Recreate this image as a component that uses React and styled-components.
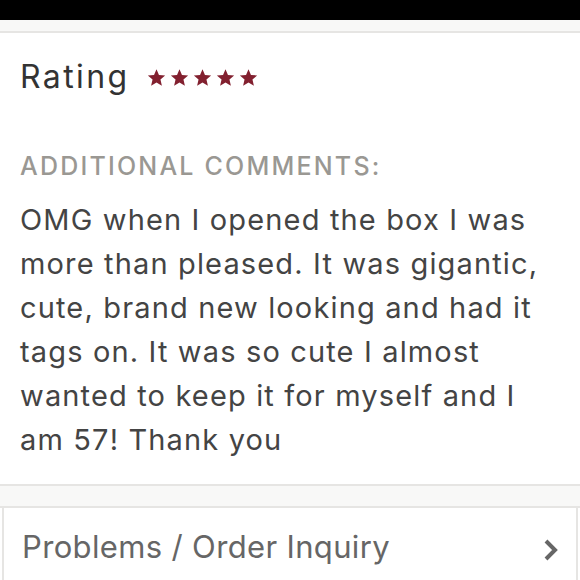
import React from "react";
import styled, { createGlobalStyle } from "styled-components";

const Global = createGlobalStyle`
  html, body { margin: 0; padding: 0; background: #fff; }
  body { font-family: Inter, Lato, sans-serif; }
`;

const Page = styled.div`
  width: 580px;
  height: 580px;
  overflow: hidden;
  display: flex;
  flex-direction: column;
  background: #fff;
`;

const TopBar = styled.div`
  height: 20px;
  background: #000;
  flex-shrink: 0;
`;

const Divider = styled.div`
  height: ${(p) => p.$h}px;
  background: #f8f8f7;
  border-top: ${(p) => (p.$top ? "2px solid #e6e5e3" : "none")};
  border-bottom: 2px solid #e6e5e3;
  flex-shrink: 0;
`;

const Section = styled.section`
  padding: 21px 20px 22px 20px;
  display: flex;
  flex-direction: column;
`;

const RatingRow = styled.div`
  display: flex;
  align-items: center;
  gap: 17px;
  height: 44px;
`;

const RatingTitle = styled.h2`
  margin: 0;
  font-size: 32px;
  font-weight: 400;
  color: #333;
  letter-spacing: 2.4px;
`;

const Stars = styled.div`
  display: flex;
  gap: 4px;
  margin-top: 2px;
`;

const Label = styled.div`
  margin-top: 53px;
  height: 30px;
  line-height: 30px;
  font-size: 25px;
  font-weight: 500;
  letter-spacing: 2.2px;
  color: #9a9893;
  text-transform: uppercase;
`;

const Comment = styled.p`
  margin: 17px 0 0 0;
  font-size: 29px;
  line-height: 44px;
  letter-spacing: 1.15px;
  color: #444;
  white-space: nowrap;
`;

const InquiryBox = styled.div`
  margin: 0 2px;
  flex: 1;
  border-left: 2px solid #e6e5e3;
  border-right: 2px solid #e6e5e3;
  display: flex;
  align-items: flex-start;
  justify-content: space-between;
  padding: 20px 18px 0 18px;
`;

const InquiryText = styled.span`
  font-size: 31px;
  letter-spacing: 0.35px;
  color: #666;
`;

const Star = () => (
  <svg width="19" height="19" viewBox="0 0 24 24">
    <path
      d="M12 1.5l3.1 7.2 7.8.7-5.9 5.2 1.8 7.7L12 18.2l-6.8 4.1 1.8-7.7-5.9-5.2 7.8-.7z"
      fill="#82202f"
    />
  </svg>
);

const Chevron = () => (
  <svg width="16" height="24" viewBox="0 0 16 24" style={{ marginTop: 10 }}>
    <path d="M4 3l9 9-9 9" fill="none" stroke="#666" strokeWidth="4" />
  </svg>
);

const lines = [
  "OMG when I opened the box I was",
  "more than pleased. It was gigantic,",
  "cute, brand new looking and had it",
  "tags on. It was so cute I almost",
  "wanted to keep it for myself and I",
  "am 57! Thank you",
];

export default function App() {
  return (
    <Page>
      <Global />
      <TopBar />
      <Divider $h={11} />
      <Section>
        <RatingRow>
          <RatingTitle>Rating</RatingTitle>
          <Stars>
            {[0, 1, 2, 3, 4].map((i) => (
              <Star key={i} />
            ))}
          </Stars>
        </RatingRow>
        <Label>Additional Comments:</Label>
        <Comment>
          {lines.map((l, i) => (
            <React.Fragment key={i}>
              {l}
              {i < lines.length - 1 && <br />}
            </React.Fragment>
          ))}
        </Comment>
      </Section>
      <Divider $top $h={20} />
      <InquiryBox>
        <InquiryText>Problems / Order Inquiry</InquiryText>
        <Chevron />
      </InquiryBox>
    </Page>
  );
}
